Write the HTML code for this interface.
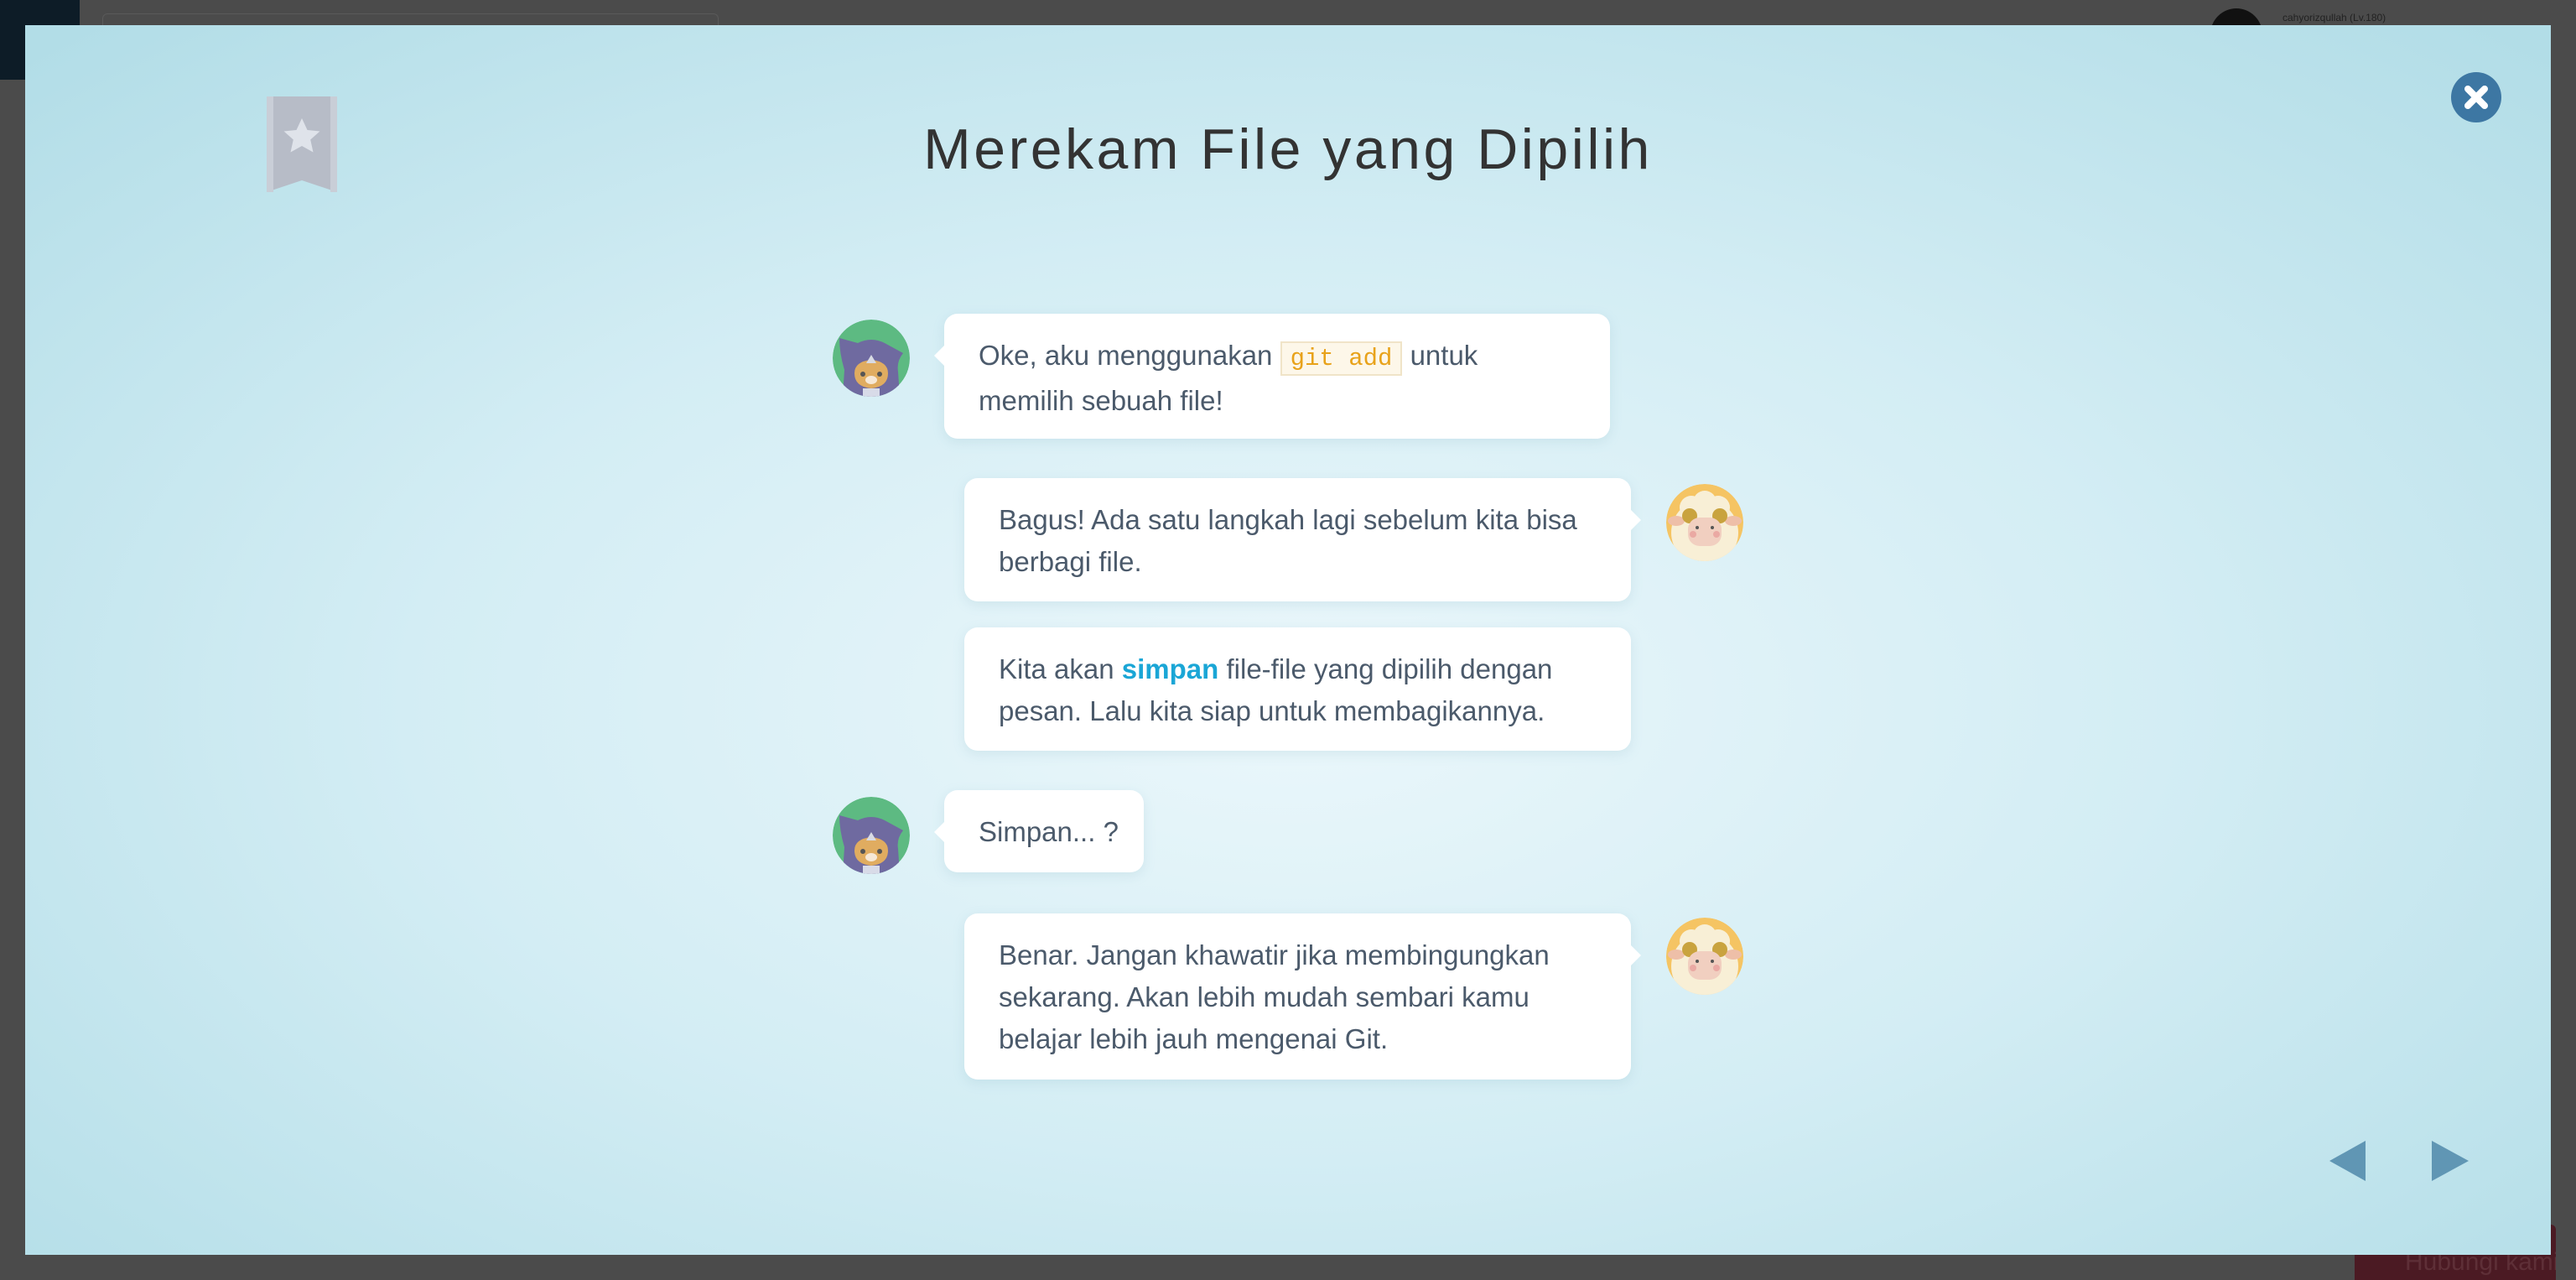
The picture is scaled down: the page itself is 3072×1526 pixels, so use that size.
<!DOCTYPE html>
<html><head><meta charset="utf-8"><style>
*{margin:0;padding:0;box-sizing:border-box}
html,body{width:3072px;height:1526px;overflow:hidden}
body{background:#4b4b4b;position:relative;font-family:"Liberation Sans",sans-serif}
.corner{position:absolute;left:0;top:0;width:95px;height:95px;background:#0d1c27}
.search{position:absolute;left:122px;top:16px;width:735px;height:20px;border:1px solid #5a5a5a;border-bottom:none;border-radius:6px 6px 0 0}
.user{position:absolute;left:2722px;top:14px;font-size:12px;color:#222}
.av0{position:absolute;left:2636px;top:10px;width:62px;height:62px;border-radius:50%;background:#111}
.red{position:absolute;left:2808px;top:1460px;width:240px;height:66px;background:#4b1a23;border-radius:6px 6px 0 0;color:#5e2f37;font-size:30px;padding:28px 0 0 60px;white-space:nowrap;overflow:hidden}
.modal{position:absolute;left:30px;top:30px;width:3012px;height:1466px;background:radial-gradient(ellipse 70% 75% at 50% 55%,#ebf7fb 0%,#d3edf4 50%,#b2dde7 100%)}
.title{position:absolute;left:0;width:3012px;top:114px;line-height:1;text-align:center;font-size:68px;color:#333;font-weight:normal;letter-spacing:3.5px}
.bub{position:absolute;background:#fff;border-radius:16px;box-shadow:0 4px 14px rgba(120,170,190,.18);color:#4b5a6b;font-size:33px;line-height:50px;padding:25px 0 0 41px;white-space:nowrap;font-family:"Liberation Sans","DejaVu Sans",sans-serif}
.bub.l:before{content:"";position:absolute;left:-12px;top:38px;border:12px solid transparent;border-left:none;border-right-color:#fff}
.bub.r:after{content:"";position:absolute;right:-12px;top:38px;border:12px solid transparent;border-right:none;border-left-color:#fff}
code{font-family:"Liberation Mono",monospace;color:#e8a21a;background:#fdf7e9;border:2px solid #f0e4c8;padding:2px 10px;font-size:29px}
.hl{color:#1aa6d6;font-weight:bold}
.ava{position:absolute;width:92px;height:92px}
</style></head><body>
<div class="corner"></div><div class="search"></div><div class="av0"></div><div class="user">cahyorizqullah (Lv.180)</div>
<div class="red">Hubungi kami.</div>
<div class="modal">
<div class="title">Merekam File yang Dipilih</div>
<svg style="position:absolute;left:288px;top:85px" width="84" height="114" viewBox="0 0 84 114"><path d="M0 0H84V114L42 100L0 114Z" fill="#b7bcc7"/><rect x="0" y="0" width="8" height="114" fill="#c9ced7"/><rect x="76" y="0" width="8" height="114" fill="#c9ced7"/><path d="M42 26l6.5 14 15 1.5-11.3 10 3.3 15L42 59l-13.5 7.5 3.3-15-11.3-10 15-1.5z" fill="#dfe3ea"/></svg>
<svg style="position:absolute;left:2893px;top:56px" width="60" height="60" viewBox="0 0 60 60"><circle cx="30" cy="30" r="30" fill="#3d77a3"/><path d="M20 20L40 40M40 20L20 40" stroke="#fff" stroke-width="8" stroke-linecap="round"/></svg>
<svg style="position:absolute;left:2748px;top:1330px" width="44" height="48"><path d="M0 24L43 0V48Z" fill="#6096b4"/></svg>
<svg style="position:absolute;left:2870px;top:1330px" width="44" height="48"><path d="M44 24L0 0V48Z" fill="#6096b4"/></svg>

<div class="bub l" style="left:1096px;top:344px;width:794px;height:149px">Oke, aku menggunakan <code>git add</code> untuk<br>memilih sebuah file!</div>
<div class="bub r" style="left:1120px;top:540px;width:795px;height:147px">Bagus! Ada satu langkah lagi sebelum kita bisa<br>berbagi file.</div>
<div class="bub" style="left:1120px;top:718px;width:795px;height:147px">Kita akan <span class="hl">simpan</span> file-file yang dipilih dengan<br>pesan. Lalu kita siap untuk membagikannya.</div>
<div class="bub l" style="left:1096px;top:912px;width:238px;height:98px">Simpan... ?</div>
<div class="bub r" style="left:1120px;top:1059px;width:795px;height:198px">Benar. Jangan khawatir jika membingungkan<br>sekarang. Akan lebih mudah sembari kamu<br>belajar lebih jauh mengenai Git.</div>

<svg class="ava" style="left:963px;top:351px" viewBox="0 0 92 92"><defs><clipPath id="c1"><circle cx="46" cy="46" r="46"/></clipPath></defs><g clip-path="url(#c1)"><circle cx="46" cy="46" r="46" fill="#5dba82"/><path d="M8 22L30 28Q46 20 62 28L84 40Q76 50 78 62L80 92H12L14 60Q8 40 8 22Z" fill="#6f6aa0"/><path d="M26 64Q26 50 46 48Q66 50 66 64Q66 80 46 82Q26 80 26 64Z" fill="#e0ac60"/><path d="M40 52L46 42L52 52Z" fill="#d8dbe4"/><circle cx="36" cy="65" r="3" fill="#555"/><circle cx="56" cy="65" r="3" fill="#555"/><ellipse cx="46" cy="72" rx="7" ry="5" fill="#f6e8d6"/><rect x="36" y="82" width="20" height="10" fill="#d8dbe8"/></g></svg>
<svg class="ava" style="left:1957px;top:547px" viewBox="0 0 92 92"><defs><clipPath id="c2"><circle cx="46" cy="46" r="46"/></clipPath></defs><g clip-path="url(#c2)"><circle cx="46" cy="46" r="46" fill="#f5c463"/><circle cx="46" cy="58" r="40" fill="#f8efd6"/><circle cx="30" cy="28" r="14" fill="#f8efd6"/><circle cx="62" cy="28" r="14" fill="#f8efd6"/><circle cx="46" cy="22" r="14" fill="#f8efd6"/><ellipse cx="12" cy="44" rx="10" ry="6" fill="#eebfa8"/><ellipse cx="80" cy="44" rx="10" ry="6" fill="#eebfa8"/><circle cx="28" cy="38" r="9" fill="#c9a33e"/><circle cx="64" cy="38" r="9" fill="#c9a33e"/><rect x="26" y="40" width="40" height="34" rx="14" fill="#f1cfc0"/><circle cx="37" cy="52" r="2" fill="#555"/><circle cx="55" cy="52" r="2" fill="#555"/><circle cx="32" cy="60" r="4" fill="#eaa9a3"/><circle cx="60" cy="60" r="4" fill="#eaa9a3"/></g></svg>
<svg class="ava" style="left:963px;top:920px" viewBox="0 0 92 92"><defs><clipPath id="c3"><circle cx="46" cy="46" r="46"/></clipPath></defs><g clip-path="url(#c3)"><circle cx="46" cy="46" r="46" fill="#5dba82"/><path d="M8 22L30 28Q46 20 62 28L84 40Q76 50 78 62L80 92H12L14 60Q8 40 8 22Z" fill="#6f6aa0"/><path d="M26 64Q26 50 46 48Q66 50 66 64Q66 80 46 82Q26 80 26 64Z" fill="#e0ac60"/><path d="M40 52L46 42L52 52Z" fill="#d8dbe4"/><circle cx="36" cy="65" r="3" fill="#555"/><circle cx="56" cy="65" r="3" fill="#555"/><ellipse cx="46" cy="72" rx="7" ry="5" fill="#f6e8d6"/><rect x="36" y="82" width="20" height="10" fill="#d8dbe8"/></g></svg>
<svg class="ava" style="left:1957px;top:1064px" viewBox="0 0 92 92"><defs><clipPath id="c4"><circle cx="46" cy="46" r="46"/></clipPath></defs><g clip-path="url(#c4)"><circle cx="46" cy="46" r="46" fill="#f5c463"/><circle cx="46" cy="58" r="40" fill="#f8efd6"/><circle cx="30" cy="28" r="14" fill="#f8efd6"/><circle cx="62" cy="28" r="14" fill="#f8efd6"/><circle cx="46" cy="22" r="14" fill="#f8efd6"/><ellipse cx="12" cy="44" rx="10" ry="6" fill="#eebfa8"/><ellipse cx="80" cy="44" rx="10" ry="6" fill="#eebfa8"/><circle cx="28" cy="38" r="9" fill="#c9a33e"/><circle cx="64" cy="38" r="9" fill="#c9a33e"/><rect x="26" y="40" width="40" height="34" rx="14" fill="#f1cfc0"/><circle cx="37" cy="52" r="2" fill="#555"/><circle cx="55" cy="52" r="2" fill="#555"/><circle cx="32" cy="60" r="4" fill="#eaa9a3"/><circle cx="60" cy="60" r="4" fill="#eaa9a3"/></g></svg>
</div>
</body></html>
